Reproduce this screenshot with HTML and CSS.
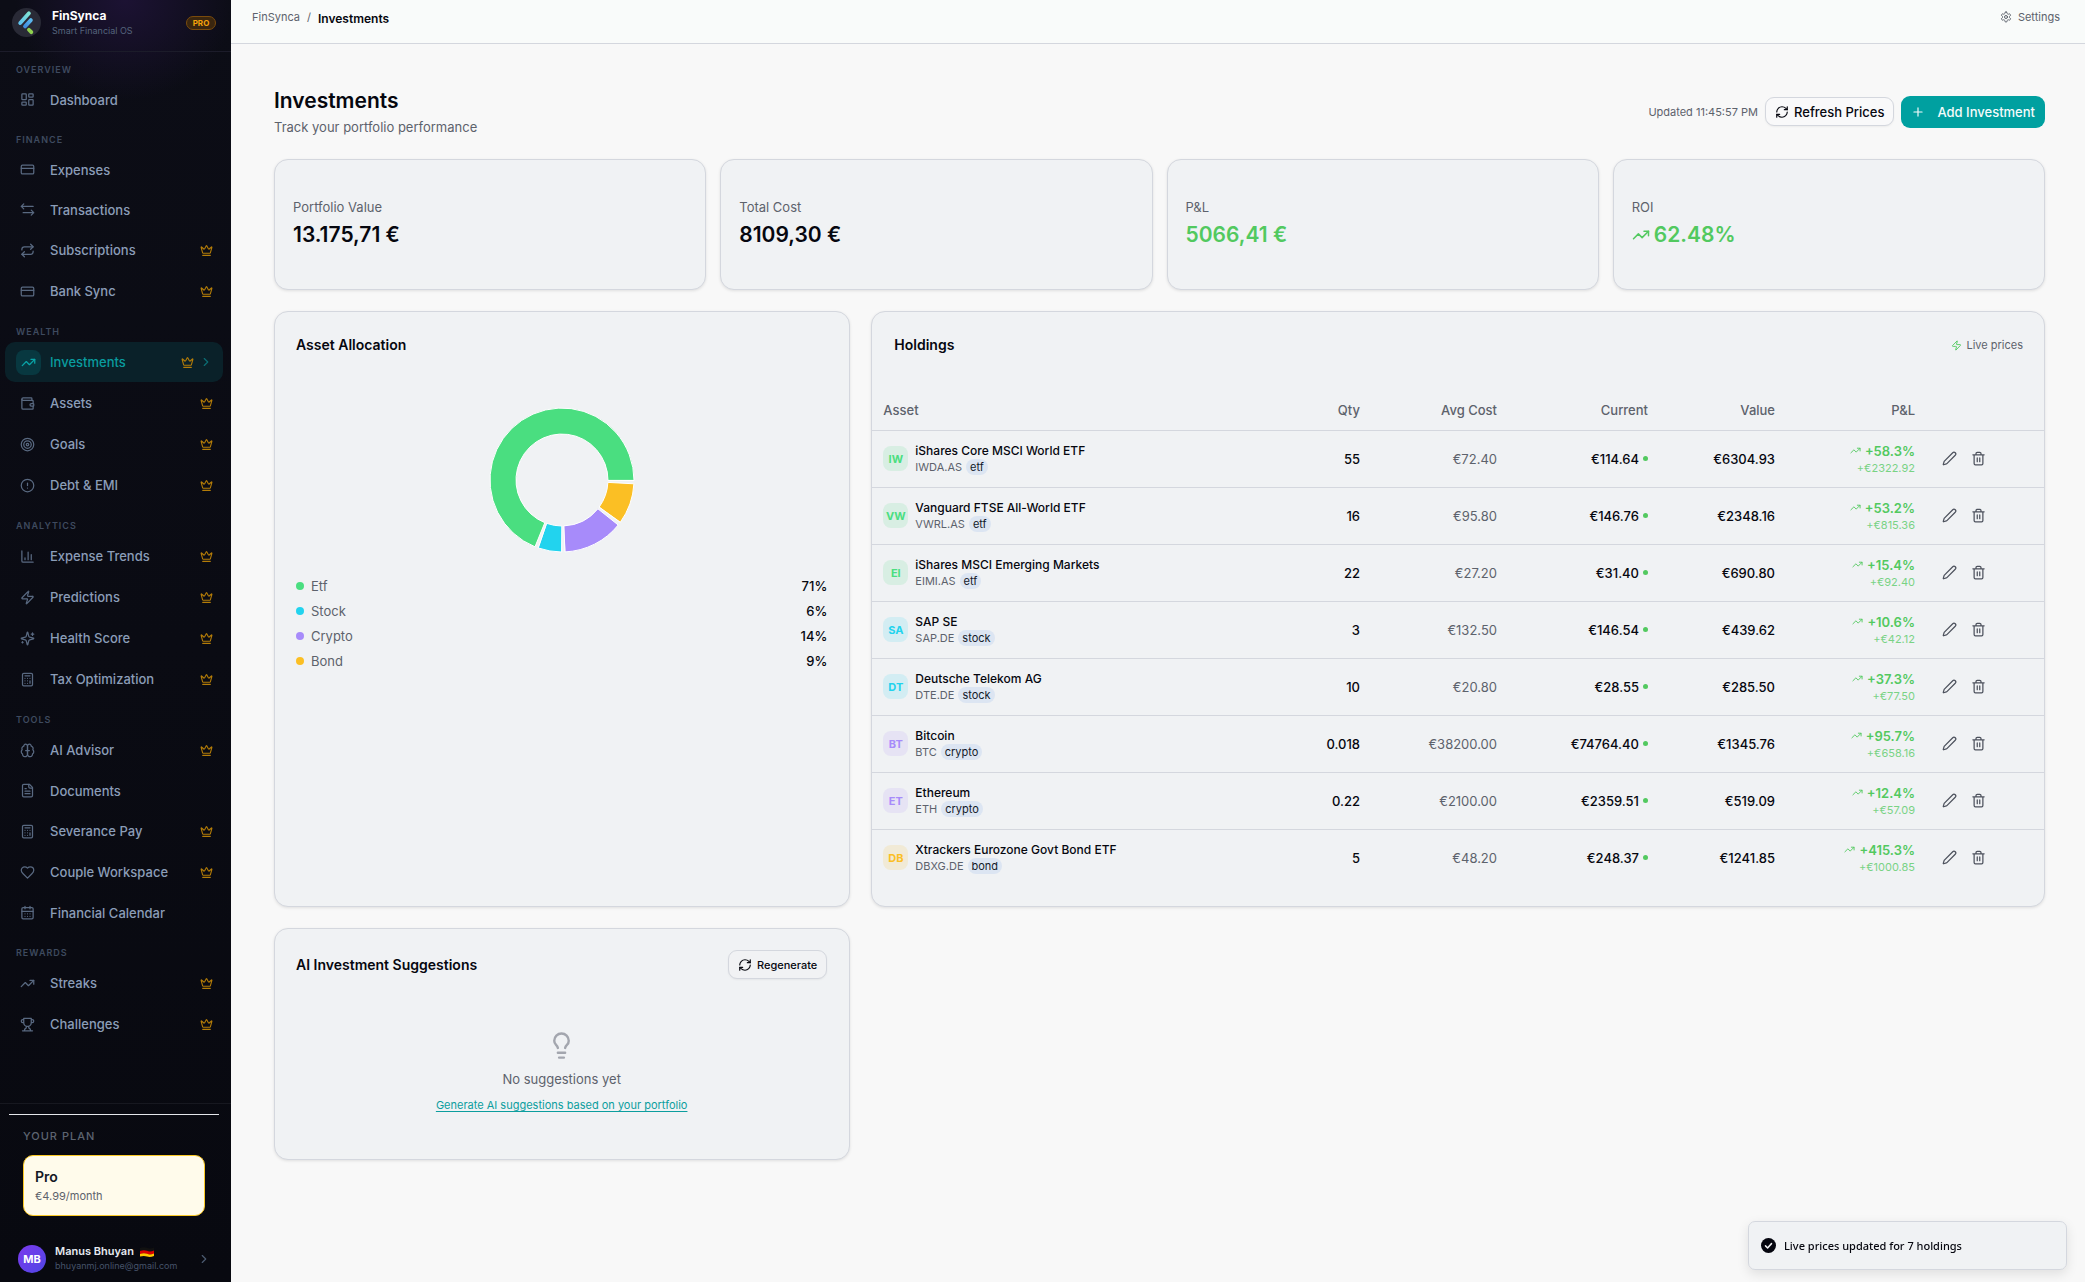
FILE: index.html
```html
<!DOCTYPE html>
<html lang="en">
<head>
<meta charset="utf-8">
<title>FinSynca – Investments</title>
<meta name="viewport" content="width=device-width, initial-scale=1">
<link rel="stylesheet" href="styles.css">
</head>
<body>
<svg class="sprite" aria-hidden="true">
  <symbol id="i-dash" viewBox="0 0 24 24"><rect width="7" height="9" x="3" y="3" rx="1"/><rect width="7" height="5" x="14" y="3" rx="1"/><rect width="7" height="9" x="14" y="12" rx="1"/><rect width="7" height="5" x="3" y="16" rx="1"/></symbol>
  <symbol id="i-card" viewBox="0 0 24 24"><rect width="20" height="14" x="2" y="5" rx="2"/><path d="M2 10h20"/></symbol>
  <symbol id="i-swap" viewBox="0 0 24 24"><path d="m6 3-4 4 4 4M2 7h19M18 13l4 4-4 4M22 17H5"/></symbol>
  <symbol id="i-repeat" viewBox="0 0 24 24"><path d="m17 2 4 4-4 4"/><path d="M3 11v-1a4 4 0 0 1 4-4h14"/><path d="m7 22-4-4 4-4"/><path d="M21 13v1a4 4 0 0 1-4 4H3"/></symbol>
  <symbol id="i-trend" viewBox="0 0 24 24"><path d="M16 7h6v6"/><path d="m22 7-8.500 8.500-5-5L2 17"/></symbol>
  <symbol id="i-wallet" viewBox="0 0 24 24"><path d="M19 7V4a1 1 0 0 0-1-1H5a2 2 0 0 0 0 4h15a1 1 0 0 1 1 1v4h-3a2 2 0 0 0 0 4h3a1 1 0 0 0 1-1v-2a1 1 0 0 0-1-1"/><path d="M3 5v14a2 2 0 0 0 2 2h15a1 1 0 0 0 1-1v-4"/></symbol>
  <symbol id="i-target" viewBox="0 0 24 24"><circle cx="12" cy="12" r="10"/><circle cx="12" cy="12" r="6"/><circle cx="12" cy="12" r="2"/></symbol>
  <symbol id="i-alert" viewBox="0 0 24 24"><circle cx="12" cy="12" r="10"/><path d="M12 8v4M12 16h.01"/></symbol>
  <symbol id="i-chart" viewBox="0 0 24 24"><path d="M3 3v16a2 2 0 0 0 2 2h16M18 17V9M13 17V5M8 17v-3"/></symbol>
  <symbol id="i-zap" viewBox="0 0 24 24"><path d="M4 14a1 1 0 0 1-.78-1.630l9.900-10.200a.5.5 0 0 1 .86.46l-1.920 6.020A1 1 0 0 0 13 10h7a1 1 0 0 1 .78 1.630l-9.900 10.200a.5.5 0 0 1-.86-.46l1.920-6.020A1 1 0 0 0 11 14z"/></symbol>
  <symbol id="i-spark" viewBox="0 0 24 24"><path d="M9.937 15.500A2 2 0 0 0 8.500 14.063l-6.135-1.582a.5.5 0 0 1 0-.962L8.500 9.936A2 2 0 0 0 9.937 8.500l1.582-6.135a.5.5 0 0 1 .963 0L14.063 8.500A2 2 0 0 0 15.500 9.937l6.135 1.581a.5.5 0 0 1 0 .964L15.500 14.063a2 2 0 0 0-1.437 1.437l-1.582 6.135a.5.5 0 0 1-.963 0z"/><path d="M20 3v4M22 5h-4M4 17v2M5 18H3"/></symbol>
  <symbol id="i-calc" viewBox="0 0 24 24"><rect width="16" height="20" x="4" y="2" rx="2"/><path d="M8 6h8M16 14v4M16 10h.01M12 10h.01M8 10h.01M12 14h.01M8 14h.01M12 18h.01M8 18h.01"/></symbol>
  <symbol id="i-brain" viewBox="0 0 24 24"><path d="M12 5a3 3 0 1 0-5.997.125 4 4 0 0 0-2.526 5.770 4 4 0 0 0 .556 6.588A4 4 0 1 0 12 18Z"/><path d="M12 5a3 3 0 1 1 5.997.125 4 4 0 0 1 2.526 5.770 4 4 0 0 1-.556 6.588A4 4 0 1 1 12 18Z"/><path d="M9 12h6"/></symbol>
  <symbol id="i-doc" viewBox="0 0 24 24"><path d="M15 2H6a2 2 0 0 0-2 2v16a2 2 0 0 0 2 2h12a2 2 0 0 0 2-2V7Z"/><path d="M14 2v4a2 2 0 0 0 2 2h4M10 9H8M16 13H8M16 17H8"/></symbol>
  <symbol id="i-heart" viewBox="0 0 24 24"><path d="M19 14c1.490-1.460 3-3.210 3-5.500A5.500 5.500 0 0 0 16.500 3c-1.760 0-3 .5-4.500 2-1.500-1.500-2.740-2-4.500-2A5.500 5.500 0 0 0 2 8.500c0 2.300 1.500 4.050 3 5.500l7 7Z"/></symbol>
  <symbol id="i-cal" viewBox="0 0 24 24"><rect width="18" height="18" x="3" y="4" rx="2"/><path d="M8 2v4M16 2v4M3 10h18M8 14h.01M12 14h.01M16 14h.01M8 18h.01M12 18h.01M16 18h.01"/></symbol>
  <symbol id="i-trophy" viewBox="0 0 24 24"><path d="M6 9H4.500a2.500 2.500 0 0 1 0-5H6M18 9h1.500a2.500 2.500 0 0 0 0-5H18M4 22h16M10 14.660V17c0 .55-.47.98-.97 1.210C7.850 18.750 7 20.240 7 22M14 14.660V17c0 .55.47.98.97 1.210C16.150 18.750 17 20.240 17 22M18 2H6v7a6 6 0 0 0 12 0V2Z"/></symbol>
  <symbol id="i-crown" viewBox="0 0 24 24"><path d="M11.562 3.266a.5.5 0 0 1 .876 0L15.390 8.870a1 1 0 0 0 1.516.294L21.183 5.500a.5.5 0 0 1 .798.519l-2.834 10.246a1 1 0 0 1-.956.734H5.810a1 1 0 0 1-.957-.734L2.020 6.020a.5.5 0 0 1 .798-.519l4.276 3.664a1 1 0 0 0 1.516-.294z"/><path d="M5 21h14"/></symbol>
  <symbol id="i-chev" viewBox="0 0 24 24"><path d="m9 18 6-6-6-6"/></symbol>
  <symbol id="i-gear" viewBox="0 0 24 24"><path d="M12.220 2h-.44a2 2 0 0 0-2 2v.18a2 2 0 0 1-1 1.730l-.43.25a2 2 0 0 1-2 0l-.15-.08a2 2 0 0 0-2.730.73l-.22.38a2 2 0 0 0 .73 2.730l.15.1a2 2 0 0 1 1 1.720v.51a2 2 0 0 1-1 1.740l-.15.09a2 2 0 0 0-.73 2.730l.22.38a2 2 0 0 0 2.730.73l.15-.08a2 2 0 0 1 2 0l.43.25a2 2 0 0 1 1 1.730V20a2 2 0 0 0 2 2h.44a2 2 0 0 0 2-2v-.18a2 2 0 0 1 1-1.730l.43-.25a2 2 0 0 1 2 0l.15.08a2 2 0 0 0 2.730-.73l.22-.39a2 2 0 0 0-.73-2.730l-.15-.08a2 2 0 0 1-1-1.740v-.5a2 2 0 0 1 1-1.740l.15-.09a2 2 0 0 0 .73-2.730l-.22-.38a2 2 0 0 0-2.730-.73l-.15.08a2 2 0 0 1-2 0l-.43-.25a2 2 0 0 1-1-1.730V4a2 2 0 0 0-2-2z"/><circle cx="12" cy="12" r="3"/></symbol>
  <symbol id="i-refresh" viewBox="0 0 24 24"><path d="M3 12a9 9 0 0 1 9-9 9.750 9.750 0 0 1 6.740 2.740L21 8"/><path d="M21 3v5h-5M21 12a9 9 0 0 1-9 9 9.750 9.750 0 0 1-6.740-2.740L3 16"/><path d="M8 16H3v5"/></symbol>
  <symbol id="i-plus" viewBox="0 0 24 24"><path d="M5 12h14M12 5v14"/></symbol>
  <symbol id="i-pen" viewBox="0 0 24 24"><path d="M21.174 6.812a1 1 0 0 0-3.986-3.987L3.842 16.174a2 2 0 0 0-.5.83l-1.321 4.352a.5.5 0 0 0 .623.622l4.353-1.320a2 2 0 0 0 .83-.497z"/></symbol>
  <symbol id="i-trash" viewBox="0 0 24 24"><path d="M3 6h18M19 6v14a2 2 0 0 1-2 2H7a2 2 0 0 1-2-2V6M8 6V4a2 2 0 0 1 2-2h4a2 2 0 0 1 2 2v2M10 11v6M14 11v6"/></symbol>
  <symbol id="i-bulb" viewBox="0 0 24 24"><path d="M15 14c.2-1 .7-1.700 1.500-2.500 1-.9 1.500-2.200 1.500-3.500A6 6 0 0 0 6 8c0 1 .2 2.200 1.500 3.500.7.700 1.300 1.500 1.500 2.500M9 18h6M10 22h4"/></symbol>
</svg>

<div class="app">
  <aside class="sidebar">
    <div class="brand">
      <svg class="logo" viewBox="0 0 30 30" aria-hidden="true">
        <defs>
          <linearGradient id="lg1" x1="1" y1="0" x2="0" y2="1"><stop offset="0" stop-color="#7fe3d4"/><stop offset="1" stop-color="#5fc3ee"/></linearGradient>
          <linearGradient id="lg2" x1="1" y1="0" x2="0" y2="1"><stop offset="0" stop-color="#5bb8ee"/><stop offset="1" stop-color="#3f8ede"/></linearGradient>
        </defs>
        <circle cx="15" cy="15" r="15" fill="#292a36"/>
        <g stroke-linecap="round" fill="none">
          <path d="M17.500 5.500 8.500 15.500" stroke="url(#lg1)" stroke-width="4"/>
          <path d="M19.500 12.500 13.500 19" stroke="url(#lg2)" stroke-width="4"/>
          <path d="M17.500 22.500 20 25" stroke="#8fd14f" stroke-width="4"/>
        </g>
      </svg>
      <div class="brand-text"><strong>FinSynca</strong><span>Smart Financial OS</span></div>
      <span class="pro">PRO</span>
    </div>

    <nav class="nav" aria-label="Main">
      <h2>Overview</h2>
      <a href="#"><svg class="ic"><use href="#i-dash"/></svg><span>Dashboard</span></a>
      <h2>Finance</h2>
      <a href="#"><svg class="ic"><use href="#i-card"/></svg><span>Expenses</span></a>
      <a href="#"><svg class="ic"><use href="#i-swap"/></svg><span>Transactions</span></a>
      <a href="#" class="paid"><svg class="ic"><use href="#i-repeat"/></svg><span>Subscriptions</span><svg class="crown"><use href="#i-crown"/></svg></a>
      <a href="#" class="paid"><svg class="ic"><use href="#i-card"/></svg><span>Bank Sync</span><svg class="crown"><use href="#i-crown"/></svg></a>
      <h2>Wealth</h2>
      <a href="#" class="paid active" aria-current="page"><i class="tile"><svg class="ic"><use href="#i-trend"/></svg></i><span>Investments</span><svg class="crown"><use href="#i-crown"/></svg><svg class="chev"><use href="#i-chev"/></svg></a>
      <a href="#" class="paid"><svg class="ic"><use href="#i-wallet"/></svg><span>Assets</span><svg class="crown"><use href="#i-crown"/></svg></a>
      <a href="#" class="paid"><svg class="ic"><use href="#i-target"/></svg><span>Goals</span><svg class="crown"><use href="#i-crown"/></svg></a>
      <a href="#" class="paid"><svg class="ic"><use href="#i-alert"/></svg><span>Debt &amp; EMI</span><svg class="crown"><use href="#i-crown"/></svg></a>
      <h2>Analytics</h2>
      <a href="#" class="paid"><svg class="ic"><use href="#i-chart"/></svg><span>Expense Trends</span><svg class="crown"><use href="#i-crown"/></svg></a>
      <a href="#" class="paid"><svg class="ic"><use href="#i-zap"/></svg><span>Predictions</span><svg class="crown"><use href="#i-crown"/></svg></a>
      <a href="#" class="paid"><svg class="ic"><use href="#i-spark"/></svg><span>Health Score</span><svg class="crown"><use href="#i-crown"/></svg></a>
      <a href="#" class="paid"><svg class="ic"><use href="#i-calc"/></svg><span>Tax Optimization</span><svg class="crown"><use href="#i-crown"/></svg></a>
      <h2>Tools</h2>
      <a href="#" class="paid"><svg class="ic"><use href="#i-brain"/></svg><span>AI Advisor</span><svg class="crown"><use href="#i-crown"/></svg></a>
      <a href="#"><svg class="ic"><use href="#i-doc"/></svg><span>Documents</span></a>
      <a href="#" class="paid"><svg class="ic"><use href="#i-calc"/></svg><span>Severance Pay</span><svg class="crown"><use href="#i-crown"/></svg></a>
      <a href="#" class="paid"><svg class="ic"><use href="#i-heart"/></svg><span>Couple Workspace</span><svg class="crown"><use href="#i-crown"/></svg></a>
      <a href="#"><svg class="ic"><use href="#i-cal"/></svg><span>Financial Calendar</span></a>
      <h2>Rewards</h2>
      <a href="#" class="paid"><svg class="ic"><use href="#i-trend"/></svg><span>Streaks</span><svg class="crown"><use href="#i-crown"/></svg></a>
      <a href="#" class="paid"><svg class="ic"><use href="#i-trophy"/></svg><span>Challenges</span><svg class="crown"><use href="#i-crown"/></svg></a>
    </nav>

    <div class="side-foot">
      <div class="plan">
        <h2>Your plan</h2>
        <div class="plan-card"><strong>Pro</strong><span>€4.99/month</span></div>
      </div>
      <a class="user" href="#">
        <span class="avatar">MB</span>
        <span class="user-text">
          <strong>Manus Bhuyan
            <svg class="flag" viewBox="0 0 14 10" role="img" aria-label="Germany"><path fill="#111" d="M0 1Q4 -.5 7 .8T14 .5V4Q10 5 7 4T0 4.300Z"/><path fill="#d90000" d="M0 4Q4 2.500 7 3.800T14 3.500V7Q10 8 7 7T0 7.300Z"/><path fill="#ffc800" d="M0 7Q4 5.500 7 6.800T14 6.500V9Q10 10.500 7 9.500T0 9.500Z"/></svg>
          </strong>
          <small>bhuyanmj.online@gmail.com</small>
        </span>
        <svg class="chev"><use href="#i-chev"/></svg>
      </a>
    </div>
  </aside>

  <div class="page">
    <header class="topbar">
      <nav class="crumbs" aria-label="Breadcrumb"><a href="#">FinSynca</a><span>/</span><strong>Investments</strong></nav>
      <a class="settings" href="#"><svg><use href="#i-gear"/></svg>Settings</a>
    </header>

    <main class="content">
      <div class="head">
        <div><h1>Investments</h1><p>Track your portfolio performance</p></div>
        <div class="head-actions">
          <span class="updated">Updated 11:45:57 PM</span>
          <button class="btn outline" type="button"><svg><use href="#i-refresh"/></svg>Refresh Prices</button>
          <button class="btn primary" type="button"><svg><use href="#i-plus"/></svg>Add Investment</button>
        </div>
      </div>

      <section class="stats">
        <div class="card stat"><span>Portfolio Value</span><strong>13.175,71 €</strong></div>
        <div class="card stat"><span>Total Cost</span><strong>8109,30 €</strong></div>
        <div class="card stat up"><span>P&amp;L</span><strong>5066,41 €</strong></div>
        <div class="card stat up"><span>ROI</span><strong><svg><use href="#i-trend"/></svg>62.48%</strong></div>
      </section>

      <div class="grid">
        <section class="card alloc">
          <h2>Asset Allocation</h2>
          <svg class="donut" viewBox="-75 -75 150 150" role="img" aria-label="Asset allocation chart">
            <path class="etf" d="M72 0A72 72 0 1 0 -27 66.800L-17.200 42.700A46 46 0 1 1 46 0Z"/>
            <path class="stock" d="M-23.400 68.100A72 72 0 0 0 -.4 72L-.2 46A46 46 0 0 1 -15 43.500Z"/>
            <path class="crypto" d="M3.400 71.900A72 72 0 0 0 56.200 45L35.900 28.800A46 46 0 0 1 2.200 45.900Z"/>
            <path class="bond" d="M58.500 42A72 72 0 0 0 71.900 3.800L45.900 2.400A46 46 0 0 1 37.400 26.800Z"/>
          </svg>
          <ul class="legend">
            <li class="etf"><span>Etf</span><b>71%</b></li>
            <li class="stock"><span>Stock</span><b>6%</b></li>
            <li class="crypto"><span>Crypto</span><b>14%</b></li>
            <li class="bond"><span>Bond</span><b>9%</b></li>
          </ul>
        </section>

        <section class="card holdings">
          <div class="card-head"><h2>Holdings</h2><span class="live"><svg><use href="#i-zap"/></svg>Live prices</span></div>
          <table>
            <colgroup><col><col class="c-qty"><col class="c-avg"><col class="c-cur"><col class="c-val"><col class="c-pl"><col class="c-act"></colgroup>
            <thead><tr><th>Asset</th><th>Qty</th><th>Avg Cost</th><th>Current</th><th>Value</th><th>P&amp;L</th><th aria-label="Actions"></th></tr></thead>
            <tbody>
              <tr><td><div class="asset etf"><i>IW</i><div><b>iShares Core MSCI World ETF</b><p>IWDA.AS<em>etf</em></p></div></div></td><td>55</td><td>€72.40</td><td><span class="cur">€114.64</span></td><td>€6304.93</td><td><div class="pl"><b><svg><use href="#i-trend"/></svg>+58.3%</b><small>+€2322.92</small></div></td><td><div class="acts"><button type="button" aria-label="Edit"><svg><use href="#i-pen"/></svg></button><button type="button" aria-label="Delete"><svg><use href="#i-trash"/></svg></button></div></td></tr>
              <tr><td><div class="asset etf"><i>VW</i><div><b>Vanguard FTSE All-World ETF</b><p>VWRL.AS<em>etf</em></p></div></div></td><td>16</td><td>€95.80</td><td><span class="cur">€146.76</span></td><td>€2348.16</td><td><div class="pl"><b><svg><use href="#i-trend"/></svg>+53.2%</b><small>+€815.36</small></div></td><td><div class="acts"><button type="button" aria-label="Edit"><svg><use href="#i-pen"/></svg></button><button type="button" aria-label="Delete"><svg><use href="#i-trash"/></svg></button></div></td></tr>
              <tr><td><div class="asset etf"><i>EI</i><div><b>iShares MSCI Emerging Markets</b><p>EIMI.AS<em>etf</em></p></div></div></td><td>22</td><td>€27.20</td><td><span class="cur">€31.40</span></td><td>€690.80</td><td><div class="pl"><b><svg><use href="#i-trend"/></svg>+15.4%</b><small>+€92.40</small></div></td><td><div class="acts"><button type="button" aria-label="Edit"><svg><use href="#i-pen"/></svg></button><button type="button" aria-label="Delete"><svg><use href="#i-trash"/></svg></button></div></td></tr>
              <tr><td><div class="asset stock"><i>SA</i><div><b>SAP SE</b><p>SAP.DE<em>stock</em></p></div></div></td><td>3</td><td>€132.50</td><td><span class="cur">€146.54</span></td><td>€439.62</td><td><div class="pl"><b><svg><use href="#i-trend"/></svg>+10.6%</b><small>+€42.12</small></div></td><td><div class="acts"><button type="button" aria-label="Edit"><svg><use href="#i-pen"/></svg></button><button type="button" aria-label="Delete"><svg><use href="#i-trash"/></svg></button></div></td></tr>
              <tr><td><div class="asset stock"><i>DT</i><div><b>Deutsche Telekom AG</b><p>DTE.DE<em>stock</em></p></div></div></td><td>10</td><td>€20.80</td><td><span class="cur">€28.55</span></td><td>€285.50</td><td><div class="pl"><b><svg><use href="#i-trend"/></svg>+37.3%</b><small>+€77.50</small></div></td><td><div class="acts"><button type="button" aria-label="Edit"><svg><use href="#i-pen"/></svg></button><button type="button" aria-label="Delete"><svg><use href="#i-trash"/></svg></button></div></td></tr>
              <tr><td><div class="asset crypto"><i>BT</i><div><b>Bitcoin</b><p>BTC<em>crypto</em></p></div></div></td><td>0.018</td><td>€38200.00</td><td><span class="cur">€74764.40</span></td><td>€1345.76</td><td><div class="pl"><b><svg><use href="#i-trend"/></svg>+95.7%</b><small>+€658.16</small></div></td><td><div class="acts"><button type="button" aria-label="Edit"><svg><use href="#i-pen"/></svg></button><button type="button" aria-label="Delete"><svg><use href="#i-trash"/></svg></button></div></td></tr>
              <tr><td><div class="asset crypto"><i>ET</i><div><b>Ethereum</b><p>ETH<em>crypto</em></p></div></div></td><td>0.22</td><td>€2100.00</td><td><span class="cur">€2359.51</span></td><td>€519.09</td><td><div class="pl"><b><svg><use href="#i-trend"/></svg>+12.4%</b><small>+€57.09</small></div></td><td><div class="acts"><button type="button" aria-label="Edit"><svg><use href="#i-pen"/></svg></button><button type="button" aria-label="Delete"><svg><use href="#i-trash"/></svg></button></div></td></tr>
              <tr><td><div class="asset bond"><i>DB</i><div><b>Xtrackers Eurozone Govt Bond ETF</b><p>DBXG.DE<em>bond</em></p></div></div></td><td>5</td><td>€48.20</td><td><span class="cur">€248.37</span></td><td>€1241.85</td><td><div class="pl"><b><svg><use href="#i-trend"/></svg>+415.3%</b><small>+€1000.85</small></div></td><td><div class="acts"><button type="button" aria-label="Edit"><svg><use href="#i-pen"/></svg></button><button type="button" aria-label="Delete"><svg><use href="#i-trash"/></svg></button></div></td></tr>
            </tbody>
          </table>
        </section>

        <section class="card ai">
          <div class="card-head"><h2>AI Investment Suggestions</h2><button class="btn outline small" type="button"><svg><use href="#i-refresh"/></svg>Regenerate</button></div>
          <div class="empty"><svg><use href="#i-bulb"/></svg><p>No suggestions yet</p><a href="#">Generate AI suggestions based on your portfolio</a></div>
        </section>
      </div>
    </main>
  </div>
</div>

<div class="toast" role="status">
  <svg viewBox="0 0 20 20" aria-hidden="true"><circle cx="10" cy="10" r="10" fill="#05060f" stroke="none"/><path d="m6 10.500 2.800 2.800L14 7.500" fill="none" stroke="#f1f2f4" stroke-width="2"/></svg>
  Live prices updated for 7 holdings
</div>
</body>
</html>
```
FILE: styles.css
```css
:root {
  --ink: #06070f;
  --muted: #5d626c;
  --line: #d4d7de;
  --card: #f0f2f4;
  --teal: #00a0a0;
  --up: #52c95f;
  --etf: #4ade80;
  --stock: #22d3ee;
  --crypto: #a78bfa;
  --bond: #fbbf24;
}

* { box-sizing: border-box; }

body {
  margin: 0;
  background: #f8f8f8;
  color: var(--ink);
  font: 13px/18px Inter, "Liberation Sans", sans-serif;
}

h1, h2, p, ul { margin: 0; padding: 0; }
a { color: inherit; text-decoration: none; }
button { font: inherit; color: inherit; }
svg { fill: none; stroke: currentColor; stroke-width: 2; stroke-linecap: round; stroke-linejoin: round; flex: none; }
.sprite { display: none; }

.app { display: flex; min-height: 100vh; }

/* Sidebar */
.sidebar {
  position: sticky;
  top: 0;
  display: flex;
  flex-direction: column;
  flex: none;
  width: 231px;
  height: 100vh;
  background: radial-gradient(ellipse 110px 100px at 125px 0, #1c1233, transparent), linear-gradient(#0c0d16, #080910);
  color: #8b9db8;
}
.brand {
  display: flex;
  align-items: center;
  height: 52px;
  padding: 0 15px 6px 12px;
  border-bottom: 1px solid #1c1c2a;
}
.logo { width: 29px; height: 29px; stroke: none; }
.brand-text { flex: 1; margin-left: 11px; display: flex; flex-direction: column; }
.brand-text strong { color: #fff; font-size: 12px; line-height: 16px; font-weight: 700; }
.brand-text span { font-size: 9px; line-height: 14px; color: #55647c; }
.pro {
  width: 30px;
  border: 1px solid #7a4b0c;
  border-radius: 8px;
  background: #3a260f;
  color: #f5a30b;
  font-size: 8px;
  line-height: 12px;
  font-weight: 700;
  text-align: center;
}

.nav { flex: 1; min-height: 0; overflow: hidden; padding: 0 8px 0 5px; }
.nav h2 {
  padding: 14px 0 4px 11px;
  font-size: 9px;
  line-height: 12px;
  font-weight: 600;
  letter-spacing: 1px;
  text-transform: uppercase;
  color: #3e4a5f;
}
.nav h2:first-child { padding-top: 12px; }
.nav a {
  display: flex;
  align-items: center;
  height: 39px;
  margin-bottom: 1px;
  padding: 0 10px 0 15px;
  border-radius: 10px;
  font-weight: 500;
}
.nav a span { flex: 1; margin-left: 15px; white-space: nowrap; }
.nav .paid { height: 40px; }
.ic { width: 15px; height: 15px; color: #596981; }
.crown { width: 13px; height: 13px; color: #b37c08; }
.chev { width: 14px; height: 14px; color: #4b5a70; }
.nav .active { padding: 0 10px 0 11px; background: #0a2129; color: #099c9f; }
.tile { display: grid; place-items: center; width: 25px; height: 25px; border-radius: 8px; background: #083840; }
.active .ic { color: #0aa5a8; }
.nav .active span { margin-left: 9px; }
.active .chev { margin-left: 5px; color: #0b6d73; }

.side-foot { border-top: 1px solid #171820; padding: 10px 12px 9px 9px; }
.plan { border-top: 1px solid #e4e6ea; padding: 12px 14px 0; }
.plan h2 { font-size: 11px; line-height: 18px; font-weight: 500; letter-spacing: 1px; text-transform: uppercase; color: #5d6470; }
.plan-card {
  display: flex;
  flex-direction: column;
  margin-top: 10px;
  height: 61px;
  padding: 11px;
  border: 1px solid #fbc926;
  border-radius: 10px;
  background: #fffbeb;
}
.plan-card strong { font-size: 14px; line-height: 20px; font-weight: 600; color: #141724; }
.plan-card span { font-size: 11px; line-height: 18px; color: #5d626c; }
.user { display: flex; align-items: center; margin: 28px 0 0 9px; height: 29px; }
.avatar {
  display: grid;
  place-items: center;
  width: 28px;
  height: 28px;
  border-radius: 50%;
  background: linear-gradient(135deg, #7c3aed, #4f46e5);
  color: #fff;
  font-size: 11px;
  font-weight: 700;
}
.user .chev { margin-right: 8px; }
.user-text { flex: 1; margin-left: 9px; display: flex; flex-direction: column; }
.user-text strong { display: flex; align-items: center; gap: 6px; font-size: 11px; line-height: 15px; font-weight: 600; color: #e6eaf0; }
.user-text small { font-size: 9px; line-height: 14px; color: #46536a; }
.flag { width: 14px; height: 10px; stroke: none; }

/* Page */
.page { flex: 1; min-width: 0; }
.topbar {
  display: flex;
  align-items: flex-start;
  justify-content: space-between;
  height: 44px;
  padding: 8px 25px 0 21px;
  border-bottom: 1px solid var(--line);
  background: #f9fbfa;
  font-size: 11px;
  color: var(--muted);
}
.crumbs { display: flex; gap: 7px; }
.crumbs strong { font-size: 12px; line-height: 21px; font-weight: 600; color: var(--ink); }
.settings { display: flex; align-items: center; gap: 6px; }
.settings svg { width: 12px; height: 12px; }

.content { padding: 42px 40px 40px 43px; }
.head { display: flex; justify-content: space-between; align-items: center; height: 51px; }
h1 { font-size: 21px; line-height: 28px; font-weight: 600; }
.head p { margin-top: 3px; color: var(--muted); }
.head-actions { display: flex; align-items: center; gap: 7px; }
.updated { font-size: 11px; color: var(--muted); }
.btn { display: flex; align-items: center; border-radius: 9px; font-weight: 500; cursor: pointer; white-space: nowrap; }
.btn svg { width: 14px; height: 14px; }
.outline { height: 29px; gap: 5px; padding: 0 9px; border: 1px solid var(--line); background: #f9f9fa; box-shadow: 0 1px 2px rgb(0 0 0 / 5%); }
.primary { height: 32px; gap: 12px; padding: 0 10px; border: 0; background: var(--teal); color: #f5fbfb; }
.small { background: #f1f2f4; font-size: 11px; }

.card { border: 1px solid var(--line); border-radius: 14px; background: var(--card); box-shadow: 0 1px 3px rgb(0 0 0 / 10%); }
.stats { display: grid; grid-template-columns: repeat(4, 1fr); gap: 14px; margin-top: 22px; }
.stat { display: flex; flex-direction: column; justify-content: center; gap: 5px; height: 131px; padding: 0 18px 3px; }
.stat span { color: var(--muted); }
.stat strong { display: flex; align-items: center; gap: 4px; font-size: 21px; line-height: 28px; font-weight: 600; }
.stat svg { width: 18px; height: 18px; }
.up strong { color: var(--up); }

.grid { display: grid; grid-template-columns: repeat(3, 1fr); gap: 21px; margin-top: 21px; }
.card h2 { font-size: 14px; line-height: 22px; font-weight: 600; }
.alloc { padding: 22px 22px 22px 21px; }
.donut { display: block; width: 150px; height: 150px; margin: 49px auto 22px; stroke: #fff; stroke-width: 1; stroke-linejoin: miter; }
.donut .etf { fill: var(--etf); }
.donut .stock { fill: var(--stock); }
.donut .crypto { fill: var(--crypto); }
.donut .bond { fill: var(--bond); }
.legend { list-style: none; }
.legend li { display: flex; align-items: center; height: 18px; margin-bottom: 7px; color: var(--muted); }
.legend li::before { content: ""; width: 8px; height: 8px; margin-right: 7px; border-radius: 50%; background: var(--tone); }
.legend span { flex: 1; }
.legend b { font-weight: 500; color: var(--ink); }
.etf { --tone: var(--etf); }
.stock { --tone: var(--stock); }
.crypto { --tone: var(--crypto); }
.bond { --tone: var(--bond); }

.card-head { display: flex; align-items: center; justify-content: space-between; }
.holdings { grid-column: span 2; padding-bottom: 20px; }
.holdings .card-head { padding: 22px 21px 0 22px; }
.live { display: flex; align-items: center; gap: 4px; font-size: 11px; color: var(--muted); }
.live svg { width: 11px; height: 11px; color: var(--up); }

table { width: 100%; margin-top: 35px; border-collapse: collapse; table-layout: fixed; }
.c-qty { width: 90px; }
.c-avg { width: 137px; }
.c-cur { width: 151px; }
.c-val { width: 127px; }
.c-pl { width: 140px; }
.c-act { width: 118px; }
th { height: 39px; padding: 0 11px; font-weight: 500; color: var(--muted); text-align: right; border-bottom: 1px solid var(--line); }
th:first-child, td:first-child { text-align: left; }
td { height: 57px; padding: 0 11px; font-weight: 500; text-align: right; border-bottom: 1px solid var(--line); }
tr:last-child td { border-bottom: 0; }
td:nth-child(3) { color: var(--muted); font-weight: 400; }
td:last-child { padding-left: 9px; }
.asset { display: flex; align-items: center; gap: 7px; }
.asset i {
  display: grid;
  place-items: center;
  width: 25px;
  height: 25px;
  border-radius: 8px;
  background: color-mix(in srgb, var(--tone) 14%, transparent);
  color: var(--tone);
  font-size: 11px;
  font-style: normal;
  font-weight: 700;
}
.asset b { display: block; font-size: 12px; line-height: 17px; font-weight: 500; }
.asset p { display: flex; align-items: center; gap: 4px; font-size: 11px; line-height: 16px; font-weight: 400; color: var(--muted); }
.asset em { padding: 0 4px; border-radius: 8px; background: #dce5f2; color: #131a2a; font-style: normal; }
.cur { display: inline-flex; align-items: center; gap: 4px; }
.cur::after { content: ""; width: 5px; height: 5px; border-radius: 50%; background: var(--up); }
.pl { display: flex; flex-direction: column; align-items: flex-end; color: var(--up); }
.pl b { display: flex; align-items: center; gap: 4px; line-height: 18px; font-weight: 600; }
.pl svg { width: 11px; height: 11px; }
.pl small { font-size: 11px; line-height: 16px; font-weight: 400; opacity: .75; }
.acts { display: flex; gap: 1px; color: #4d525d; }
.acts button { display: grid; place-items: center; width: 28px; height: 28px; padding: 0; border: 0; background: none; cursor: pointer; }
.acts svg { width: 15px; height: 15px; }

.ai { height: 232px; padding: 21px 22px 21px 21px; }
.empty { display: flex; flex-direction: column; align-items: center; margin-top: 52px; color: var(--muted); }
.empty svg { width: 29px; height: 29px; color: #a3a6ae; }
.empty p { margin-top: 10px; }
.empty a { margin-top: 8px; font-size: 11px; color: #0c9e9e; text-decoration: underline; text-underline-offset: 2px; }

.toast {
  position: fixed;
  right: 18px;
  bottom: 12px;
  display: flex;
  align-items: center;
  gap: 8px;
  width: 319px;
  height: 49px;
  padding: 0 12px;
  border: 1px solid var(--line);
  border-radius: 7px;
  background: #f0f2f4;
  box-shadow: 0 4px 12px rgb(0 0 0 / 10%);
  font: 500 11px/18px "Noto Sans", "Open Sans", sans-serif;
}
.toast svg { width: 15px; height: 15px; }
```
